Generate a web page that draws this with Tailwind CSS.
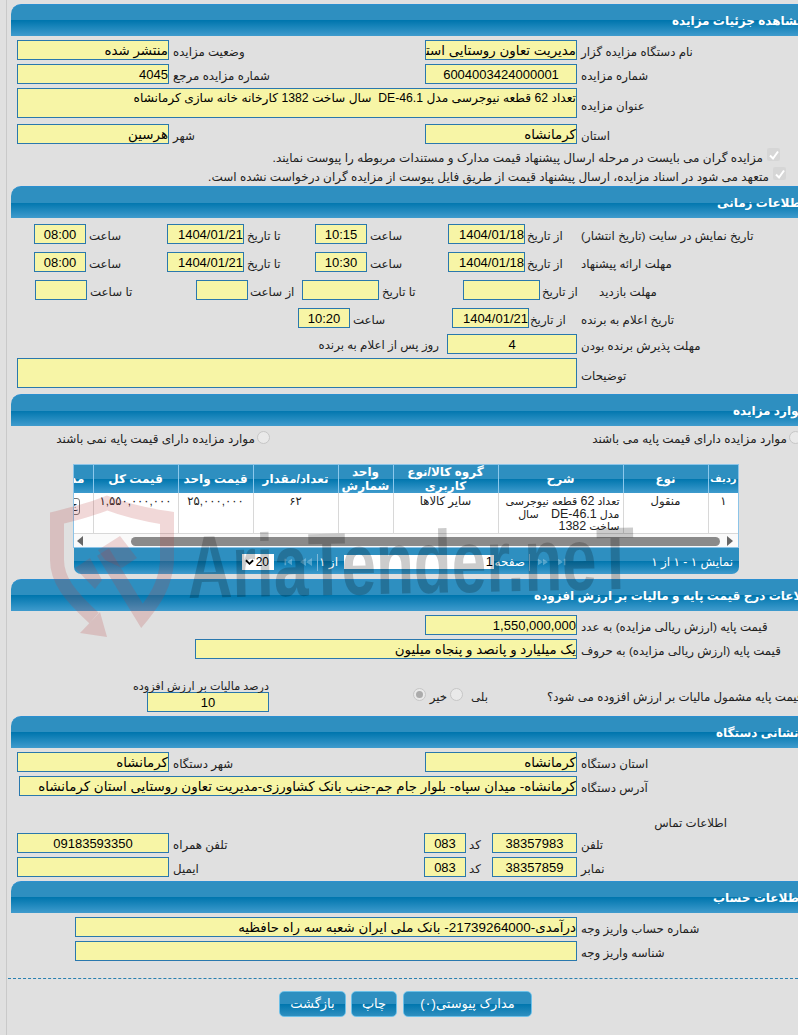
<!DOCTYPE html>
<html lang="fa" dir="rtl">
<head>
<meta charset="utf-8">
<title>مشاهده جزئیات مزایده</title>
<script src="https://cdn.jsdelivr.net/npm/@tailwindcss/browser@4"></script>
</head>
<body class="bg-[#e0e0e0]">
<div class="relative w-[798px] h-[1035px] overflow-hidden bg-[#e0e0e0] text-[#222] text-[11.8px] leading-6 [font-family:'Liberation_Sans','DejaVu_Sans',sans-serif]">
  <div class="absolute left-[6px] top-0 bottom-0 w-px bg-[#c9c9c9]"></div>

  <!-- Section 1 -->
  <div class="mt-1 h-8 ml-[11px] -mr-5 rounded-tl-[10px] border-t border-[#2b8fd0] bg-[linear-gradient(to_bottom,#2e8fc0_0%,#2e8fc0_50%,#0076ae_50%,#3f9bcd_100%)] text-left pl-[661px] pt-[6px] text-[12px] leading-5 font-bold text-white whitespace-nowrap">مشاهده جزئیات مزایده</div>
  <div class="flex h-5 mt-1">
    <div class="w-[221px] text-left pl-1 whitespace-nowrap">نام دستگاه مزایده گزار</div>
    <div class="w-[152px] h-5 border border-[#2a78ad] bg-[#f7f5a6] overflow-hidden whitespace-nowrap text-black leading-5 text-[13.4px]">مدیریت تعاون روستایی استان کرمانشاه</div>
    <div class="w-[256px] text-left pl-1 whitespace-nowrap">وضعیت مزایده</div>
    <div class="w-[152px] h-5 border border-[#2a78ad] bg-[#f7f5a6] overflow-hidden whitespace-nowrap text-black leading-5 text-[13.4px]">منتشر شده</div>
  </div>
  <div class="flex h-5 mt-1">
    <div class="w-[221px] text-left pl-1 whitespace-nowrap">شماره مزایده</div>
    <div class="w-[152px] h-5 border border-[#2a78ad] bg-[#f7f5a6] overflow-hidden whitespace-nowrap text-black leading-5 text-[13px] text-center">6004003424000001</div>
    <div class="w-[256px] text-left pl-1 whitespace-nowrap">شماره مزایده مرجع</div>
    <div class="w-[152px] h-5 border border-[#2a78ad] bg-[#f7f5a6] overflow-hidden whitespace-nowrap text-black leading-5 text-[13px]">4045</div>
  </div>
  <div class="flex h-[30px] mt-1">
    <div class="w-[221px] text-left pl-1 pt-[6px] whitespace-nowrap">عنوان مزایده</div>
    <div class="w-[560px] h-[30px] border border-[#2a78ad] bg-[#f7f5a6] overflow-hidden whitespace-nowrap text-black leading-[18px] text-[12.2px]">تعداد 62 قطعه نیوجرسی مدل DE-46.1&nbsp; سال ساخت 1382 کارخانه خانه سازی کرمانشاه</div>
  </div>
  <div class="flex h-5 mt-[6px]">
    <div class="w-[221px] text-left pl-1 whitespace-nowrap">استان</div>
    <div class="w-[152px] h-5 border border-[#2a78ad] bg-[#f7f5a6] overflow-hidden whitespace-nowrap text-black leading-5 text-[13.4px]">کرمانشاه</div>
    <div class="w-[256px] text-left pl-1 whitespace-nowrap">شهر</div>
    <div class="w-[152px] h-5 border border-[#2a78ad] bg-[#f7f5a6] overflow-hidden whitespace-nowrap text-black leading-5 text-[13.4px]">هرسین</div>
  </div>
  <div class="flex h-[18px] mt-1 mr-[18px] gap-1 text-[12px] leading-5">
    <div class="w-[13px] h-[13px] rounded-[2px] bg-[#d6d6d6] shrink-0 flex items-center justify-center"><svg viewBox="0 0 12 12" class="w-3 h-3"><path d="M2 6.5 L5 9.5 L10 2.5" fill="none" stroke="#fff" stroke-width="2"/></svg></div>
    <div class="whitespace-nowrap">مزایده گران می بایست در مرحله ارسال پیشنهاد قیمت مدارک و مستندات مربوطه را پیوست نمایند.</div>
  </div>
  <div class="flex h-[18px] mt-px mr-3 gap-1 text-[12px] leading-5">
    <div class="w-[13px] h-[13px] rounded-[2px] bg-[#d6d6d6] shrink-0 flex items-center justify-center"><svg viewBox="0 0 12 12" class="w-3 h-3"><path d="M2 6.5 L5 9.5 L10 2.5" fill="none" stroke="#fff" stroke-width="2"/></svg></div>
    <div class="whitespace-nowrap">متعهد می شود در اسناد مزایده، ارسال پیشنهاد قیمت از طریق فایل پیوست از مزایده گران درخواست نشده است.</div>
  </div>

  <!-- Section 2 -->
  <div class="mt-px h-8 ml-[11px] -mr-5 rounded-tl-[10px] border-t border-[#2b8fd0] bg-[linear-gradient(to_bottom,#2e8fc0_0%,#2e8fc0_50%,#0076ae_50%,#3f9bcd_100%)] text-left pl-[706px] pt-[6px] text-[12px] leading-5 font-bold text-white whitespace-nowrap">اطلاعات زمانی</div>
  <div class="flex h-5 mt-[6px]">
    <div class="w-[217px] text-left whitespace-nowrap">تاریخ نمایش در سایت (تاریخ انتشار)</div>
    <div class="w-[56px] text-left pl-[2px] whitespace-nowrap">از تاریخ</div>
    <div class="w-[77px] h-5 border border-[#2a78ad] bg-[#f7f5a6] overflow-hidden whitespace-nowrap text-black leading-5 text-[13px] text-right">1404/01/18</div>
    <div class="w-[81px] text-left pl-[3px] whitespace-nowrap">ساعت</div>
    <div class="w-[52px] h-5 border border-[#2a78ad] bg-[#f7f5a6] overflow-hidden whitespace-nowrap text-black leading-5 text-[13px] text-center">10:15</div>
    <div class="w-[71px] text-left pl-[3px] whitespace-nowrap">تا تاریخ</div>
    <div class="w-[77px] h-5 border border-[#2a78ad] bg-[#f7f5a6] overflow-hidden whitespace-nowrap text-black leading-5 text-[13px] text-right">1404/01/21</div>
    <div class="w-[81px] text-left pl-[3px] whitespace-nowrap">ساعت</div>
    <div class="w-[52px] h-5 border border-[#2a78ad] bg-[#f7f5a6] overflow-hidden whitespace-nowrap text-black leading-5 text-[13px] text-center">08:00</div>
  </div>
  <div class="flex h-5 mt-2">
    <div class="w-[217px] text-left whitespace-nowrap">مهلت ارائه پیشنهاد</div>
    <div class="w-[56px] text-left pl-[2px] whitespace-nowrap">از تاریخ</div>
    <div class="w-[77px] h-5 border border-[#2a78ad] bg-[#f7f5a6] overflow-hidden whitespace-nowrap text-black leading-5 text-[13px] text-right">1404/01/18</div>
    <div class="w-[81px] text-left pl-[3px] whitespace-nowrap">ساعت</div>
    <div class="w-[52px] h-5 border border-[#2a78ad] bg-[#f7f5a6] overflow-hidden whitespace-nowrap text-black leading-5 text-[13px] text-center">10:30</div>
    <div class="w-[71px] text-left pl-[3px] whitespace-nowrap">تا تاریخ</div>
    <div class="w-[77px] h-5 border border-[#2a78ad] bg-[#f7f5a6] overflow-hidden whitespace-nowrap text-black leading-5 text-[13px] text-right">1404/01/21</div>
    <div class="w-[81px] text-left pl-[3px] whitespace-nowrap">ساعت</div>
    <div class="w-[52px] h-5 border border-[#2a78ad] bg-[#f7f5a6] overflow-hidden whitespace-nowrap text-black leading-5 text-[13px] text-center">08:00</div>
  </div>
  <div class="flex h-5 mt-2">
    <div class="w-[217px] text-left pl-[18px] whitespace-nowrap">مهلت بازدید</div>
    <div class="w-[41px] text-left pl-[2px] whitespace-nowrap">از تاریخ</div>
    <div class="w-[77px] h-5 border border-[#2a78ad] bg-[#f7f5a6]"></div>
    <div class="w-[84px] text-left pl-[3px] whitespace-nowrap">تا تاریخ</div>
    <div class="w-[77px] h-5 border border-[#2a78ad] bg-[#f7f5a6]"></div>
    <div class="w-[54px] text-left pl-[2px] whitespace-nowrap">از ساعت</div>
    <div class="w-[52px] h-5 border border-[#2a78ad] bg-[#f7f5a6]"></div>
    <div class="w-[109px] text-left pl-[3px] whitespace-nowrap">تا ساعت</div>
    <div class="w-[52px] h-5 border border-[#2a78ad] bg-[#f7f5a6]"></div>
  </div>
  <div class="flex h-5 mt-2">
    <div class="w-[217px] text-left whitespace-nowrap">تاریخ اعلام به برنده</div>
    <div class="w-[52px] text-left pl-px whitespace-nowrap">از تاریخ</div>
    <div class="w-[77px] h-5 border border-[#2a78ad] bg-[#f7f5a6] overflow-hidden whitespace-nowrap text-black leading-5 text-[13px] text-right">1404/01/21</div>
    <div class="w-[102px] text-left pl-[3px] whitespace-nowrap">ساعت</div>
    <div class="w-[52px] h-5 border border-[#2a78ad] bg-[#f7f5a6] overflow-hidden whitespace-nowrap text-black leading-5 text-[13px] text-center">10:20</div>
  </div>
  <div class="flex h-5 mt-[6px]">
    <div class="w-[221px] text-left pl-1 whitespace-nowrap">مهلت پذیرش برنده بودن</div>
    <div class="w-[130px] h-5 border border-[#2a78ad] bg-[#f7f5a6] overflow-hidden whitespace-nowrap text-black leading-5 text-[13px] text-center">4</div>
    <div class="mr-2 whitespace-nowrap leading-[22px]">روز پس از اعلام به برنده</div>
  </div>
  <div class="flex h-[30px] mt-1">
    <div class="w-[221px] text-left pl-1 pt-[6px] whitespace-nowrap">توضیحات</div>
    <div class="w-[560px] h-[30px] border border-[#2a78ad] bg-[#f7f5a6]"></div>
  </div>

  <!-- Section 3 -->
  <div class="mt-[6px] h-8 ml-[11px] -mr-5 rounded-tl-[10px] border-t border-[#2b8fd0] bg-[linear-gradient(to_bottom,#2e8fc0_0%,#2e8fc0_50%,#0076ae_50%,#3f9bcd_100%)] text-left pl-[722px] pt-[6px] text-[12px] leading-5 font-bold text-white whitespace-nowrap">موارد مزایده</div>
  <div class="flex h-[17px] mt-[5px] -mr-1 text-[12px] leading-4">
    <div class="flex w-[532px] gap-[2px]">
      <div class="w-[13px] h-[13px] shrink-0 rounded-full border border-[#c6c6c6] bg-[#e9e9e9]"></div>
      <div class="whitespace-nowrap">موارد مزایده دارای قیمت پایه می باشند</div>
    </div>
    <div class="flex gap-[2px]">
      <div class="w-[13px] h-[13px] shrink-0 rounded-full border border-[#c6c6c6] bg-[#e9e9e9]"></div>
      <div class="whitespace-nowrap">موارد مزایده دارای قیمت پایه نمی باشند</div>
    </div>
  </div>

  <div class="mt-4 mr-[59px] w-[666px] h-[84px] border border-[#8cc4e8] overflow-hidden bg-white">
    <table class="table-fixed border-collapse w-[705px] text-[12px] leading-[14px]">
      <colgroup>
        <col class="w-[30px]"><col class="w-[85px]"><col class="w-[125px]"><col class="w-[105px]"><col class="w-[55px]"><col class="w-[85px]"><col class="w-[75px]"><col class="w-[85px]"><col class="w-[60px]">
      </colgroup>
      <thead>
        <tr class="h-[27px] bg-[linear-gradient(to_bottom,#2e8fc0_0%,#2e8fc0_50%,#0076ae_50%,#3f9bcd_100%)] text-white font-bold">
          <th class="border-l border-[#8cc8ec] p-0 font-bold whitespace-nowrap text-[10px]">ردیف</th>
          <th class="border-l border-[#8cc8ec] p-0 font-bold">نوع</th>
          <th class="border-l border-[#8cc8ec] p-0 font-bold">شرح</th>
          <th class="border-l border-[#8cc8ec] p-0 font-bold">گروه کالا/نوع کاربری</th>
          <th class="border-l border-[#8cc8ec] p-0 font-bold">واحد شمارش</th>
          <th class="border-l border-[#8cc8ec] p-0 font-bold">تعداد/مقدار</th>
          <th class="border-l border-[#8cc8ec] p-0 font-bold">قیمت واحد</th>
          <th class="border-l border-[#8cc8ec] p-0 font-bold">قیمت کل</th>
          <th class="p-0 pr-2 font-bold text-right whitespace-nowrap">مدارک</th>
        </tr>
      </thead>
      <tbody>
        <tr class="h-10 align-top text-center text-[#222] border-b border-[#d8d8d8] leading-[12.6px] text-[11.6px]">
          <td class="border-l border-[#d8d8d8] pt-[2px]">۱</td>
          <td class="border-l border-[#d8d8d8] pt-[2px]">منقول</td>
          <td class="border-l border-[#d8d8d8] pt-[2px] pr-[3px] text-right text-[11px] whitespace-nowrap overflow-hidden">تعداد <span class="text-[12.5px]">62</span> قطعه نیوجرسی<br>مدل <span class="text-[12.5px]">DE-46.1</span>&nbsp;&nbsp;&nbsp; سال<br>ساخت <span class="text-[12.5px]">1382</span></td>
          <td class="border-l border-[#d8d8d8] pt-[2px]">سایر کالاها</td>
          <td class="border-l border-[#d8d8d8] pt-[2px]"></td>
          <td class="border-l border-[#d8d8d8] pt-[2px]">۶۲</td>
          <td class="border-l border-[#d8d8d8] pt-[2px]">۲۵,۰۰۰,۰۰۰</td>
          <td class="border-l border-[#d8d8d8] pt-[2px]">۱,۵۵۰,۰۰۰,۰۰۰</td>
          <td class="pt-[5px] pr-[13px]"><div class="w-[40px] h-[17px] border border-[#777] rounded-[3px] bg-white text-[10px] text-right pr-px">ج</div></td>
        </tr>
      </tbody>
    </table>
    <div class="flex items-center h-[15px] bg-[#fafafa] pr-[5px] pl-[3px]">
      <svg viewBox="0 0 6 10" class="w-[6px] h-[10px] shrink-0"><path d="M0 0 L6 5 L0 10 Z" fill="#666"/></svg>
      <div class="mr-[7px] w-[589px] h-[9px] rounded-full bg-[#8a8a8a]"></div>
      <div class="flex-1"></div>
      <svg viewBox="0 0 6 10" class="w-[6px] h-[10px] shrink-0"><path d="M6 0 L0 5 L6 10 Z" fill="#666"/></svg>
    </div>
  </div>
  <div class="mr-[59px] w-[665px] h-[26px] rounded-b-[7px] bg-[linear-gradient(to_bottom,#2e8fc0_0%,#2e8fc0_50%,#0076ae_50%,#3f9bcd_100%)] flex items-center text-white text-[12px] leading-5 pt-[2px]">
    <div class="w-[135px] pr-[6px] whitespace-nowrap">نمایش ۱ - ۱ از ۱</div>
    <svg viewBox="0 0 12 8" class="w-[10px] h-2 mr-[36px] shrink-0 opacity-40"><path d="M0 0 L6 4 L0 8 Z M7 0 H9 V8 H7 Z" fill="#bfe0f0"/></svg>
    <svg viewBox="0 0 12 8" class="w-[10px] h-2 mr-[10px] shrink-0 opacity-40"><path d="M0 0 L6 4 L0 8 Z M6 0 L12 4 L6 8 Z" fill="#bfe0f0"/></svg>
    <div class="w-px h-[17px] bg-[#7fb8d8] mr-2 shrink-0"></div>
    <div class="w-[27px] mr-[4px] whitespace-nowrap shrink-0">صفحه</div>
    <div class="w-[150px] h-[14px] bg-white text-black text-right text-[13px] leading-[14px] pr-[1px] mr-[4px] shrink-0">1</div>
    <div class="mr-[6px] w-[16px] whitespace-nowrap shrink-0">از ۱</div>
    <div class="w-px h-[17px] bg-[#7fb8d8] mr-[4px] shrink-0"></div>
    <svg viewBox="0 0 12 8" class="w-3 h-2 mr-[5px] shrink-0 opacity-40"><path d="M12 0 L6 4 L12 8 Z M6 0 L0 4 L6 8 Z" fill="#bfe0f0"/></svg>
    <svg viewBox="0 0 12 8" class="w-[10px] h-2 mr-2 shrink-0 opacity-40"><path d="M12 0 L6 4 L12 8 Z M3 0 H5 V8 H3 Z" fill="#bfe0f0"/></svg>
    <div class="w-[32px] h-4 mr-2 shrink-0 bg-white text-black flex items-center justify-between pr-[5px] pl-[3px] leading-4"><span>20</span><svg viewBox="0 0 10 7" class="w-[9px] h-[7px]"><path d="M1 1 L5 5 L9 1" fill="none" stroke="#000" stroke-width="2"/></svg></div>
  </div>

  <!-- Section 4 -->
  <div class="mt-[5px] h-8 ml-[11px] -mr-5 rounded-tl-[10px] border-t border-[#2b8fd0] bg-[linear-gradient(to_bottom,#2e8fc0_0%,#2e8fc0_50%,#0076ae_50%,#3f9bcd_100%)] text-left pl-[525px] pt-[6px] text-[12px] leading-5 font-bold text-white whitespace-nowrap">اطلاعات درج قیمت پایه و مالیات بر ارزش افزوده</div>
  <div class="flex h-5 mt-1">
    <div class="w-[221px] text-left pl-1 whitespace-nowrap">قیمت پایه (ارزش ریالی مزایده) به عدد</div>
    <div class="w-[152px] h-5 border border-[#2a78ad] bg-[#f7f5a6] overflow-hidden whitespace-nowrap text-black leading-5 text-[13px]">1,550,000,000</div>
  </div>
  <div class="flex h-5 mt-1">
    <div class="w-[221px] text-left pl-1 whitespace-nowrap">قیمت پایه (ارزش ریالی مزایده) به حروف</div>
    <div class="w-[382px] h-5 border border-[#2a78ad] bg-[#f7f5a6] overflow-hidden whitespace-nowrap text-black leading-5 text-[13.4px]">یک میلیارد و پانصد و پنجاه میلیون</div>
  </div>
  <div class="flex h-8 mt-[21px] leading-5">
    <div dir="ltr" class="w-[251px] pt-[7px] text-left whitespace-nowrap"><span dir="rtl" class="inline-block">قیمت پایه مشمول مالیات بر ارزش افزوده می شود؟</span></div>
    <div class="w-[59px]"></div>
    <div class="w-5 pt-[7px] whitespace-nowrap">بلی</div>
    <div class="w-[13px] h-[13px] mt-[8px] mr-[5px] rounded-full border border-[#c6c6c6] bg-[#e9e9e9]"></div>
    <div class="w-4 mr-[3px] pt-[7px] whitespace-nowrap">خیر</div>
    <div class="w-[13px] h-[13px] mt-[8px] mr-[5px] rounded-full border border-[#c6c6c6] bg-[#e9e9e9] flex items-center justify-center"><div class="w-[7px] h-[7px] rounded-full bg-[#ababab]"></div></div>
    <div class="w-[122px] mr-[144px]">
      <div class="h-3 leading-3 whitespace-nowrap text-[11.2px]">درصد مالیات بر ارزش افزوده</div>
      <div class="w-[122px] h-5 border border-[#2a78ad] bg-[#f7f5a6] text-black leading-5 text-[13px] text-center">10</div>
    </div>
  </div>

  <!-- Section 5 -->
  <div class="mt-1 h-8 ml-[11px] -mr-5 rounded-tl-[10px] border-t border-[#2b8fd0] bg-[linear-gradient(to_bottom,#2e8fc0_0%,#2e8fc0_50%,#0076ae_50%,#3f9bcd_100%)] text-left pl-[705px] pt-[6px] text-[12px] leading-5 font-bold text-white whitespace-nowrap">نشانی دستگاه</div>
  <div class="flex h-5 mt-1">
    <div class="w-[221px] text-left pl-1 whitespace-nowrap">استان دستگاه</div>
    <div class="w-[152px] h-5 border border-[#2a78ad] bg-[#f7f5a6] overflow-hidden whitespace-nowrap text-black leading-5 text-[13.4px]">کرمانشاه</div>
    <div class="w-[256px] text-left pl-1 whitespace-nowrap">شهر دستگاه</div>
    <div class="w-[152px] h-5 border border-[#2a78ad] bg-[#f7f5a6] overflow-hidden whitespace-nowrap text-black leading-5 text-[13.4px]">کرمانشاه</div>
  </div>
  <div class="flex h-5 mt-1">
    <div class="w-[221px] text-left pl-1 whitespace-nowrap">آدرس دستگاه</div>
    <div class="w-[558px] h-5 border border-[#2a78ad] bg-[#f7f5a6] overflow-hidden whitespace-nowrap text-black leading-5 text-[13.4px]">کرمانشاه- میدان سپاه- بلوار جام جم-جنب بانک کشاورزی-مدیریت تعاون روستایی استان کرمانشاه</div>
  </div>
  <div class="mt-[19px] h-[18px] mr-[71px] whitespace-nowrap leading-4">اطلاعات تماس</div>
  <div class="flex h-5">
    <div class="w-[221px] text-left pl-1 whitespace-nowrap">تلفن</div>
    <div class="w-[85px] h-5 border border-[#2a78ad] bg-[#f7f5a6] overflow-hidden whitespace-nowrap text-black leading-5 text-[13px] text-center">38357983</div>
    <div class="w-[26px] text-left pl-[3px] whitespace-nowrap">کد</div>
    <div class="w-[42px] h-5 border border-[#2a78ad] bg-[#f7f5a6] overflow-hidden whitespace-nowrap text-black leading-5 text-[13px] text-center">083</div>
    <div class="w-[255px] text-left pl-1 whitespace-nowrap">تلفن همراه</div>
    <div class="w-[152px] h-5 border border-[#2a78ad] bg-[#f7f5a6] overflow-hidden whitespace-nowrap text-black leading-5 text-[13px] text-center">09183593350</div>
  </div>
  <div class="flex h-5 mt-1">
    <div class="w-[221px] text-left pl-1 whitespace-nowrap">نمابر</div>
    <div class="w-[85px] h-5 border border-[#2a78ad] bg-[#f7f5a6] overflow-hidden whitespace-nowrap text-black leading-5 text-[13px] text-center">38357859</div>
    <div class="w-[26px] text-left pl-[3px] whitespace-nowrap">کد</div>
    <div class="w-[42px] h-5 border border-[#2a78ad] bg-[#f7f5a6] overflow-hidden whitespace-nowrap text-black leading-5 text-[13px] text-center">083</div>
    <div class="w-[255px] text-left pl-1 whitespace-nowrap">ایمیل</div>
    <div class="w-[152px] h-5 border border-[#2a78ad] bg-[#f7f5a6]"></div>
  </div>

  <!-- Section 6 -->
  <div class="mt-1 h-8 ml-[11px] -mr-5 rounded-tl-[10px] border-t border-[#2b8fd0] bg-[linear-gradient(to_bottom,#2e8fc0_0%,#2e8fc0_50%,#0076ae_50%,#3f9bcd_100%)] text-left pl-[702px] pt-[6px] text-[12px] leading-5 font-bold text-white whitespace-nowrap">اطلاعات حساب</div>
  <div class="flex h-5 mt-1">
    <div class="w-[221px] text-left pl-1 whitespace-nowrap">شماره حساب واریز وجه</div>
    <div class="w-[502px] h-5 border border-[#2a78ad] bg-[#f7f5a6] overflow-hidden whitespace-nowrap text-black leading-5 text-[13.4px]">درآمدی-21739264000- بانک ملی ایران شعبه سه راه حافظیه</div>
  </div>
  <div class="flex h-5 mt-1">
    <div class="w-[221px] text-left pl-1 whitespace-nowrap">شناسه واریز وجه</div>
    <div class="w-[502px] h-5 border border-[#2a78ad] bg-[#f7f5a6]"></div>
  </div>

  <div class="mt-[17px] ml-2 border-t border-dashed border-[#2a80b0]"></div>
  <div class="mt-3 mr-[266px] flex h-[26px] text-white text-[13px]">
    <div class="w-[129px] h-[26px] rounded-[5px] border border-[#6cc0e8] bg-[linear-gradient(to_bottom,#2e8fc0_0%,#2e8fc0_50%,#0076ae_50%,#2e8fc0_100%)] text-center leading-6 whitespace-nowrap">مدارک پیوستی(۰)</div>
    <div class="w-[46px] h-[26px] mr-[6px] rounded-[5px] border border-[#6cc0e8] bg-[linear-gradient(to_bottom,#2e8fc0_0%,#2e8fc0_50%,#0076ae_50%,#2e8fc0_100%)] text-center leading-6 whitespace-nowrap">چاپ</div>
    <div class="w-[67px] h-[26px] mr-[5px] rounded-[5px] border border-[#6cc0e8] bg-[linear-gradient(to_bottom,#2e8fc0_0%,#2e8fc0_50%,#0076ae_50%,#2e8fc0_100%)] text-center leading-6 whitespace-nowrap">بازگشت</div>
  </div>

  <!-- Watermark overlay -->
  <svg class="absolute left-0 top-0 w-[798px] h-[1035px] pointer-events-none [direction:ltr]" viewBox="0 0 798 1035">
    <g fill="none" stroke="#b83a3a" stroke-opacity="0.2" stroke-width="14">
      <path d="M94 618 C70 596 57 580 57 560 L57 518 C90 510 100 506 107 503 C120 508 140 514 167 518 L167 562 C165 585 155 600 142 616 L103 552"/>
    </g>
    <g fill="#b83a3a" fill-opacity="0.2">
      <path d="M80 633 L107 637 L100 612 Z"/>
      <path d="M75 568 L90 558 L102 580 L95 589 Z"/>
      <path d="M98 550 L120 536 L137 558 L122 568 L105 560 Z"/>
    </g>
    <text x="188" y="598" transform="rotate(-1.2 188 598)" textLength="447" lengthAdjust="spacingAndGlyphs" font-family="Liberation Sans" font-weight="700" font-size="89" fill="#000" fill-opacity="0.2">AriaTender.neT</text>
  </svg>
</div>
</body>
</html>
